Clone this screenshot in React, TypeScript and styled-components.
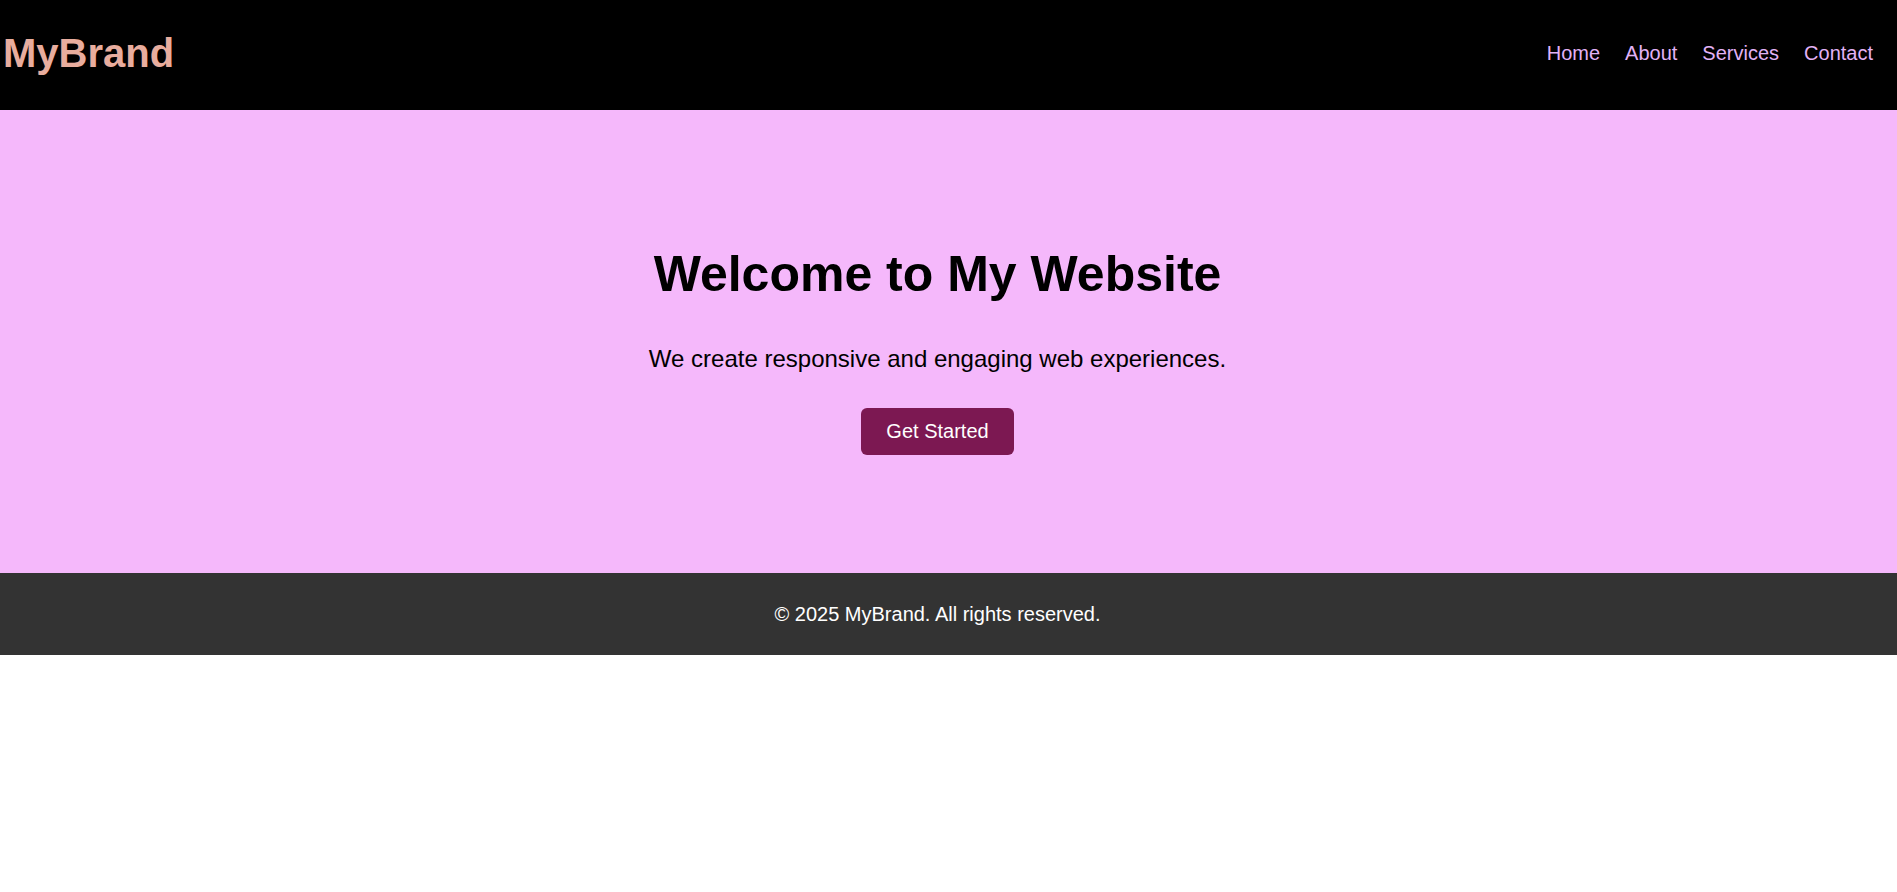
import React from "react";
import styled, { createGlobalStyle } from "styled-components";

const GlobalStyle = createGlobalStyle`
  * { box-sizing: border-box; }
  html, body { margin: 0; padding: 0; background: #ffffff; }
  body { font-family: "Liberation Sans", Arial, sans-serif; }
`;

const Header = styled.header`
  height: 110px;
  background: #000000;
  display: flex;
  align-items: center;
  justify-content: space-between;
  padding: 0 24px 4px 3px;
`;

const Logo = styled.div`
  font-size: 40px;
  font-weight: 700;
  color: #e8ad9e;
  line-height: 46px;
`;

const Nav = styled.nav`
  display: flex;
  gap: 25px;
`;

const NavLink = styled.a`
  font-size: 20px;
  line-height: 23px;
  color: #e2b2f6;
  text-decoration: none;
`;

const Hero = styled.section`
  background: #f5b8fb;
  display: flex;
  flex-direction: column;
  align-items: center;
  text-align: center;
  padding: 136px 22px 118px 0;
`;

const Title = styled.h1`
  margin: 0 0 41px;
  font-size: 50px;
  line-height: 57.5px;
  font-weight: 700;
  color: #000000;
`;

const Lead = styled.p`
  margin: 0 0 36px;
  font-size: 24px;
  line-height: 27.6px;
  color: #000000;
`;

const CTA = styled.button`
  font-family: "Liberation Sans", Arial, sans-serif;
  font-size: 20px;
  line-height: 23px;
  padding: 12px 25px;
  border: none;
  border-radius: 6px;
  background: #7c1852;
  color: #ffffff;
  cursor: pointer;
`;

const Footer = styled.footer`
  background: #333333;
  color: #ffffff;
  text-align: center;
  font-size: 20px;
  line-height: 23px;
  padding: 29.5px 22px 29.5px 0;
`;

export default function App() {
  return (
    <>
      <GlobalStyle />
      <Header>
        <Logo>MyBrand</Logo>
        <Nav>
          <NavLink href="#">Home</NavLink>
          <NavLink href="#">About</NavLink>
          <NavLink href="#">Services</NavLink>
          <NavLink href="#">Contact</NavLink>
        </Nav>
      </Header>
      <Hero>
        <Title>Welcome to My Website</Title>
        <Lead>We create responsive and engaging web experiences.</Lead>
        <CTA>Get Started</CTA>
      </Hero>
      <Footer>© 2025 MyBrand. All rights reserved.</Footer>
    </>
  );
}
